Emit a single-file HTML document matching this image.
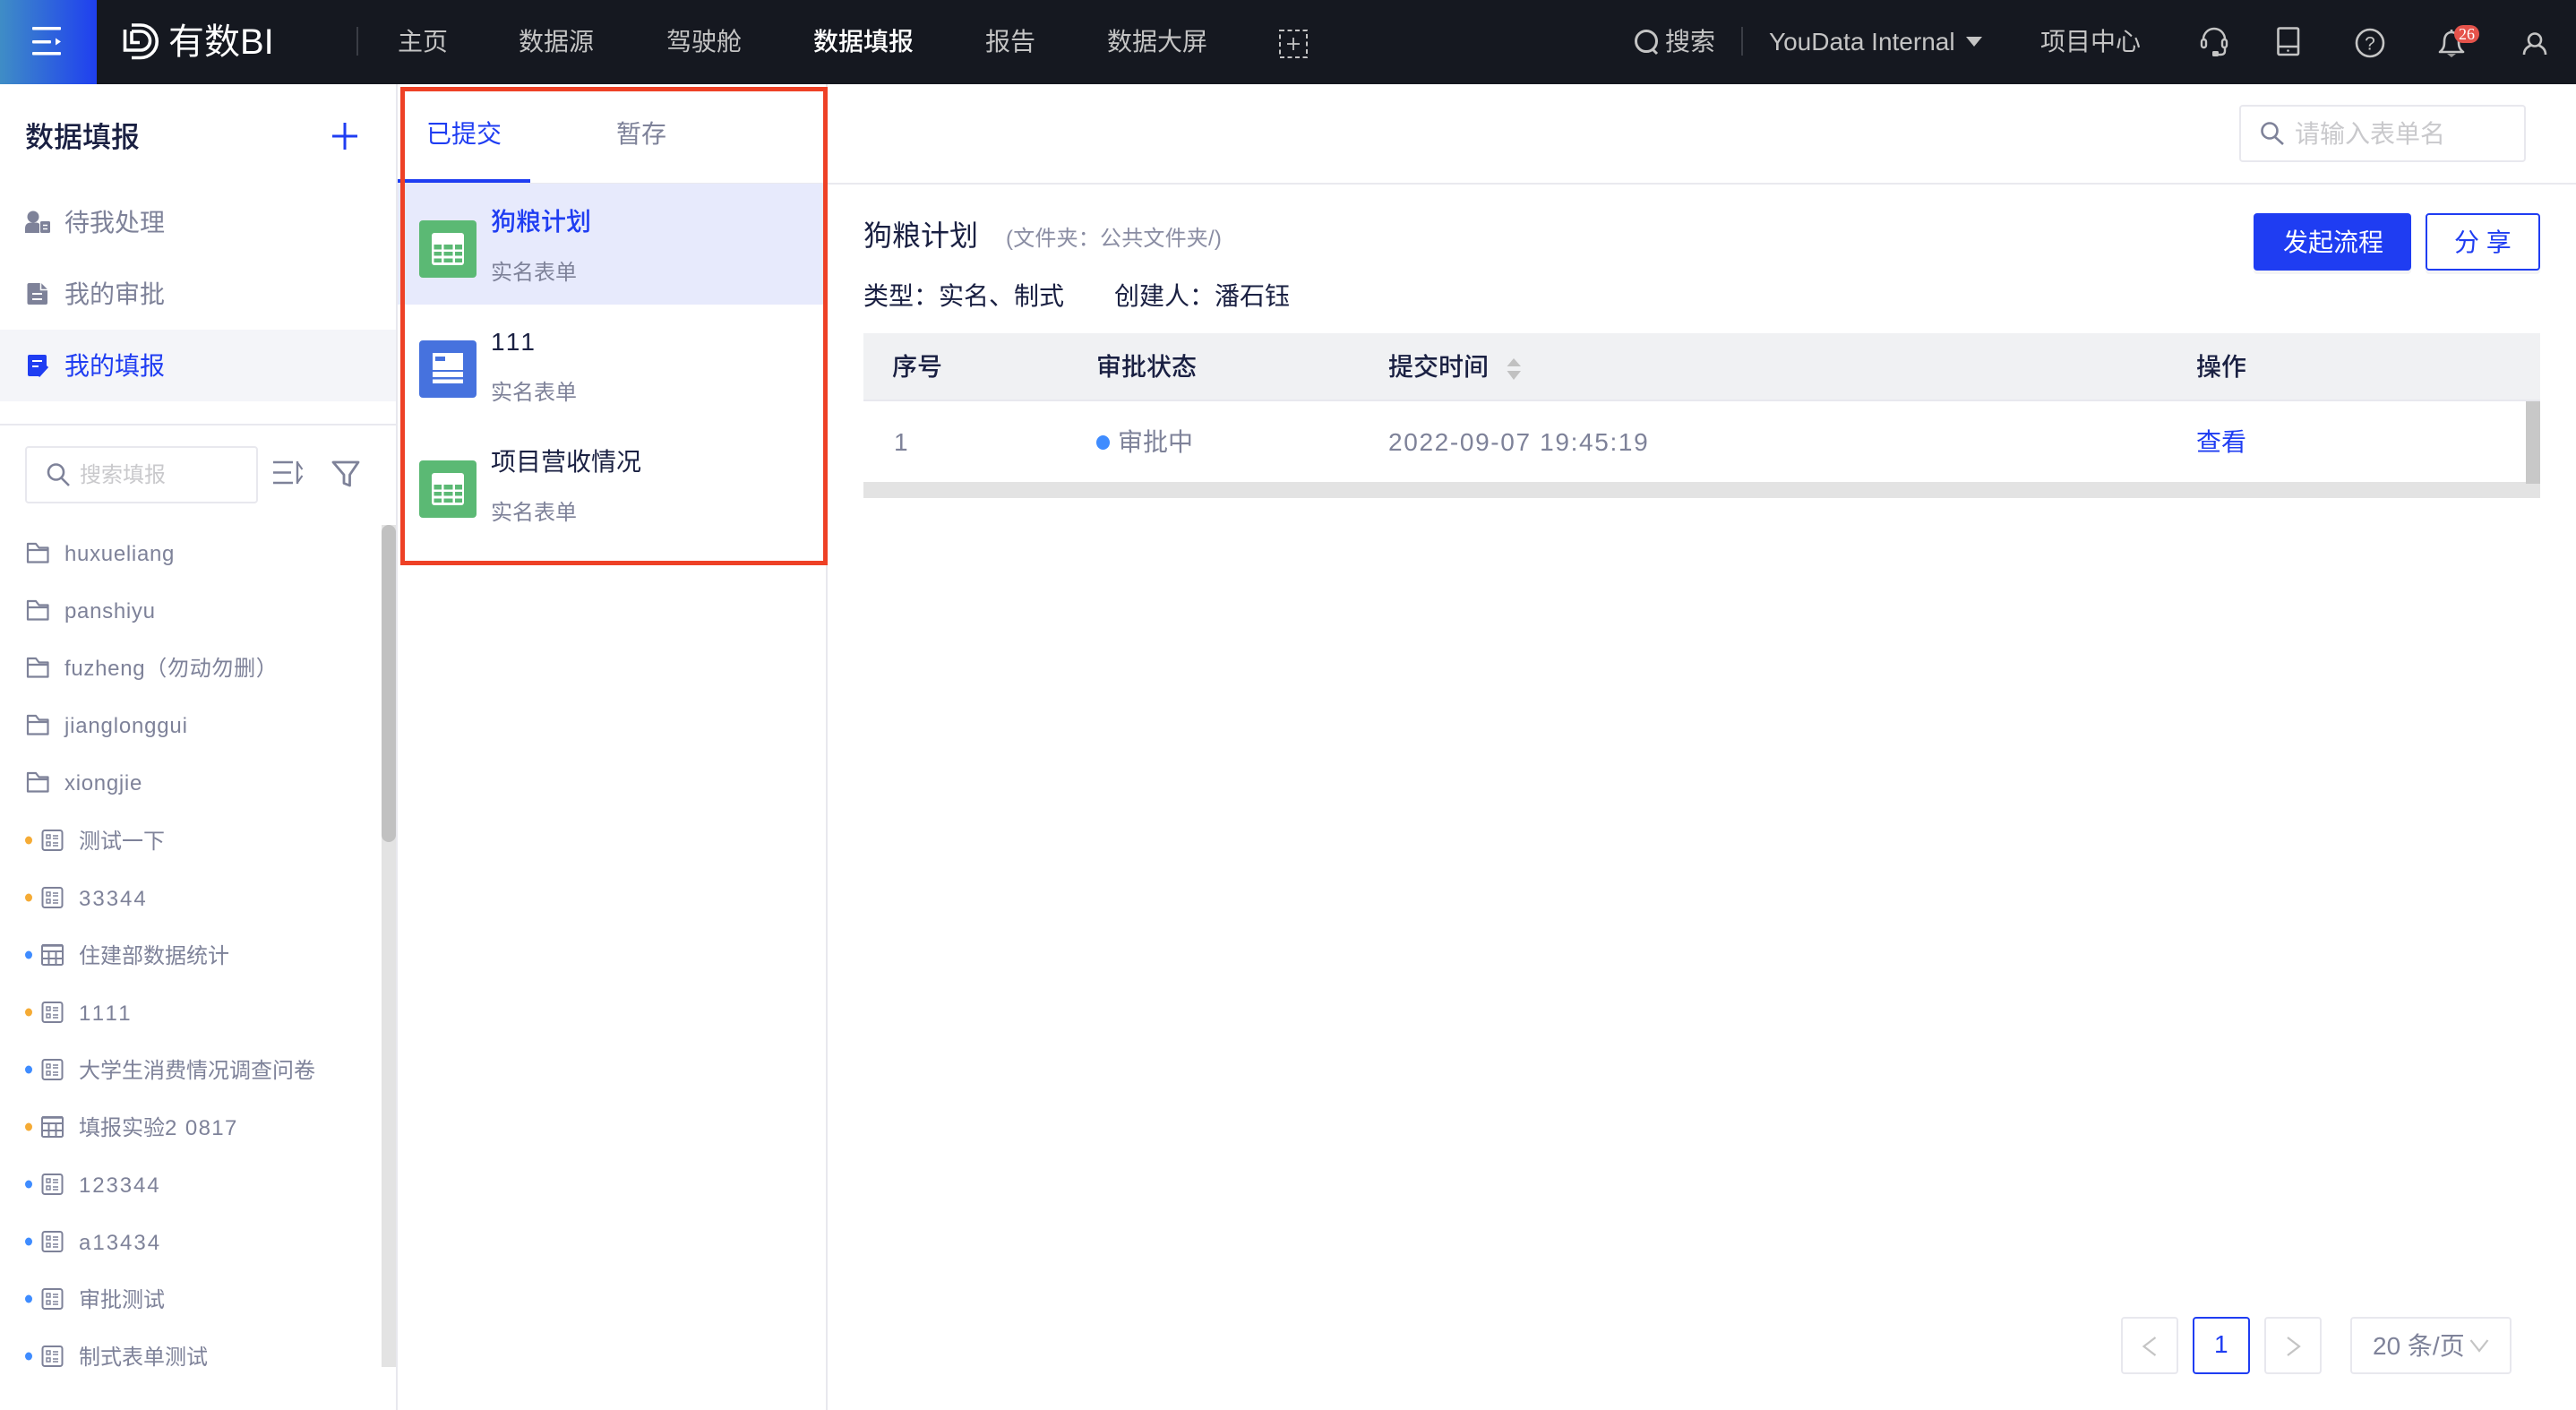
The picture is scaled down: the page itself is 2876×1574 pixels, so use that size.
<!DOCTYPE html>
<html lang="zh-CN">
<head>
<meta charset="utf-8">
<title>有数BI 数据填报</title>
<style>
html,body{margin:0;padding:0;width:2876px;height:1574px;overflow:hidden;background:#fff}
body{position:relative;font-family:"Liberation Sans","Noto Sans CJK SC",sans-serif;color:#1a2042}
.b{position:absolute}
.t{position:absolute;white-space:nowrap;line-height:40px;height:40px;font-size:28px;margin:1px 0 0 -1px}
.g{color:#7e8299}
.n{color:#c4c4c4}
.m{font-weight:500}
.s{font-size:24px}
.l{font-size:24px;color:#7e8299;letter-spacing:.7px}
.ph{color:#c9c9cc}
.bl{color:#1f3df2}
svg.o{position:absolute;left:0;top:0}
</style>
</head>
<body>
<!-- header -->
<div class="b" style="left:0;top:0;width:2876px;height:94px;background:#151820"></div>
<div class="b" style="left:0;top:0;width:108px;height:94px;background:linear-gradient(90deg,#3f8dc6,#1f3ff0)"></div>
<div class="t" style="left:189px;top:26px;font-size:40px;color:#fff">有数BI</div>
<div class="b" style="left:398px;top:30px;width:2px;height:32px;background:#3a3d45"></div>
<div class="t n" style="left:445px;top:26px">主页</div>
<div class="t n" style="left:580px;top:26px">数据源</div>
<div class="t n" style="left:745px;top:26px">驾驶舱</div>
<div class="t m" style="left:909px;top:26px;color:#fff">数据填报</div>
<div class="t n" style="left:1101px;top:26px">报告</div>
<div class="t n" style="left:1237px;top:26px">数据大屏</div>
<div class="t n" style="left:1860px;top:26px">搜索</div>
<div class="b" style="left:1944px;top:30px;width:2px;height:32px;background:#3a3d45"></div>
<div class="t n" style="left:1976px;top:26px">YouData Internal</div>
<div class="t n" style="left:2279px;top:26px">项目中心</div>

<!-- sidebar -->
<div class="b" style="left:442px;top:94px;width:2px;height:1480px;background:#e8e8ee"></div>
<div class="t m" style="left:29px;top:132px;font-size:32px">数据填报</div>
<div class="b" style="left:0;top:368px;width:442px;height:80px;background:#f4f5f9"></div>
<div class="b" style="left:0;top:473px;width:442px;height:2px;background:#e9e9ef"></div>
<div class="t g" style="left:73px;top:228px">待我处理</div>
<div class="t g" style="left:73px;top:308px">我的审批</div>
<div class="t bl" style="left:73px;top:388px">我的填报</div>
<div class="b" style="left:28px;top:498px;width:256px;height:60px;border:2px solid #e8e8ee;border-radius:4px"></div>
<div class="t s ph" style="left:90px;top:510px">搜索填报</div>
<div class="b" style="left:426px;top:586px;width:16px;height:940px;background:#e3e3e3"></div>
<div class="b" style="left:426px;top:586px;width:16px;height:354px;background:#c1c1c1;border-radius:8px"></div>

<div class="t l" style="left:73px;top:598px">huxueliang</div>
<div class="t l" style="left:73px;top:662px">panshiyu</div>
<div class="t l" style="left:73px;top:726px">fuzheng（勿动勿删）</div>
<div class="t l" style="left:73px;top:790px;letter-spacing:.8px">jianglonggui</div>
<div class="t l" style="left:73px;top:854px">xiongjie</div>
<div class="t l" style="left:89px;top:919px;letter-spacing:0">测试一下</div>
<div class="t l" style="left:89px;top:983px;letter-spacing:2px">33344</div>
<div class="t l" style="left:89px;top:1047px;letter-spacing:0">住建部数据统计</div>
<div class="t l" style="left:89px;top:1111px;letter-spacing:3.2px">1111</div>
<div class="t l" style="left:89px;top:1175px;letter-spacing:0">大学生消费情况调查问卷</div>
<div class="t l" style="left:89px;top:1239px;letter-spacing:0">填报实验<span style="letter-spacing:1.400px">2 0817</span></div>
<div class="t l" style="left:89px;top:1303px;letter-spacing:1.900px">123344</div>
<div class="t l" style="left:89px;top:1367px;letter-spacing:2px">a13434</div>
<div class="t l" style="left:89px;top:1431px;letter-spacing:0">审批测试</div>
<div class="t l" style="left:89px;top:1495px;letter-spacing:0">制式表单测试</div>

<!-- middle panel -->
<div class="b" style="left:922px;top:94px;width:2px;height:1480px;background:#e8e8ee"></div>
<div class="b" style="left:444px;top:204px;width:2432px;height:2px;background:#e9e9ef"></div>
<div class="b" style="left:444px;top:200px;width:148px;height:4px;background:#1f3df2"></div>
<div class="t bl" style="left:477px;top:129px">已提交</div>
<div class="t g" style="left:689px;top:129px">暂存</div>
<div class="b" style="left:444px;top:205px;width:477px;height:135px;background:#e7eafc"></div>
<div class="t m bl" style="left:549px;top:227px">狗粮计划</div>
<div class="t s g" style="left:549px;top:284px">实名表单</div>
<div class="t" style="left:549px;top:361px;letter-spacing:3.200px">111</div>
<div class="t s g" style="left:549px;top:418px">实名表单</div>
<div class="t" style="left:549px;top:495px">项目营收情况</div>
<div class="t s g" style="left:549px;top:552px">实名表单</div>
<div class="b" style="left:447px;top:97px;width:467px;height:524px;border:5px solid #ee4126"></div>

<!-- right top -->
<div class="b" style="left:2500px;top:117px;width:316px;height:60px;border:2px solid #e8e8ee;border-radius:4px"></div>
<div class="t ph" style="left:2563px;top:129px">请输入表单名</div>

<!-- content head -->
<div class="t" style="left:965px;top:242px;font-size:32px">狗粮计划</div>
<div class="t s" style="left:1124px;top:246px;color:#8a8da3;letter-spacing:.2px">(文件夹：公共文件夹/)</div>
<div class="t" style="left:965px;top:310px">类型：实名、制式</div>
<div class="t" style="left:1245px;top:310px">创建人：潘石钰</div>
<div class="b" style="left:2516px;top:238px;width:176px;height:64px;background:#1f3df2;border-radius:4px;box-shadow:0 4px 0 #f4f4f6"></div>
<div class="t" style="left:2550px;top:250px;color:#fff">发起流程</div>
<div class="b" style="left:2708px;top:238px;width:124px;height:60px;border:2px solid #1f3df2;border-radius:4px;box-shadow:0 4px 0 #f4f4f6"></div>
<div class="t bl" style="left:2741px;top:250px">分 享</div>

<!-- table -->
<div class="b" style="left:964px;top:372px;width:1872px;height:74px;background:#f0f1f3"></div>
<div class="b" style="left:964px;top:446px;width:1872px;height:2px;background:#e8e8ee"></div>
<div class="t m" style="left:997px;top:389px">序号</div>
<div class="t m" style="left:1225px;top:389px">审批状态</div>
<div class="t m" style="left:1551px;top:389px">提交时间</div>
<div class="t m" style="left:2453px;top:389px">操作</div>
<div class="t g" style="left:999px;top:473px">1</div>
<div class="b" style="left:1224px;top:486px;width:15px;height:16px;border-radius:50%;background:#3f8cff"></div>
<div class="t g" style="left:1249px;top:473px">审批中</div>
<div class="t g" style="left:1551px;top:473px;letter-spacing:1.650px">2022-09-07 19:45:19</div>
<div class="t bl" style="left:2453px;top:473px">查看</div>
<div class="b" style="left:964px;top:538px;width:1872px;height:18px;background:#e3e3e3"></div>
<div class="b" style="left:2820px;top:448px;width:16px;height:92px;background:#c8c8c8"></div>

<!-- pagination -->
<div class="b" style="left:2368px;top:1470px;width:60px;height:60px;border:2px solid #e8e8ee;border-radius:4px"></div>
<div class="b" style="left:2448px;top:1470px;width:60px;height:60px;border:2px solid #1f3df2;border-radius:4px"></div>
<div class="t bl" style="left:2473px;top:1480px">1</div>
<div class="b" style="left:2528px;top:1470px;width:60px;height:60px;border:2px solid #e8e8ee;border-radius:4px"></div>
<div class="b" style="left:2624px;top:1470px;width:176px;height:60px;border:2px solid #e8e8ee;border-radius:4px"></div>
<div class="t g" style="left:2650px;top:1482px">20 条/页</div>

<!-- icons -->
<svg class="o" width="2876" height="1574" viewBox="0 0 2876 1574" fill="none">
<defs>
<g id="folder" stroke="#7e8299" stroke-width="2.200" stroke-linejoin="round"><path d="M31 607h9l3.500 4.500H53.500V627.500H31Z M31 614H53.500"/></g>
<g id="form" stroke="#7e8299"><rect x="47.500" y="-11" width="22" height="22" rx="2.500" stroke-width="2"/><path stroke-width="1.400" d="M52 -6h4v4h-4Z M52 2h4v4h-4Z M59 -5h6 M59 -2h6 M59 3h6 M59 6h6"/></g>
<g id="grid" stroke="#7e8299" stroke-width="2"><rect x="47" y="-11" width="23" height="22" rx="1.500"/><path d="M47 -4H70 M47 4H70 M54.500 -4V11 M62.500 -4V11"/><path d="M47 -10.500H70" stroke-width="2.600"/></g>
<g id="sheet"><rect x="0" y="0" width="64" height="64" rx="4" fill="#5bb974"/><rect x="14" y="14" width="36" height="36" rx="3" fill="#fff"/><path fill="#5bb974" d="M16.500 27h8.500v5.500h-8.500Z M27.500 27h10v5.500h-10Z M40 27h8v5.500h-8Z M16.500 35h8.500v4.500h-8.500Z M27.500 35h10v4.500h-10Z M40 35h8v4.500h-8Z M16.500 42.500h8.500v4.500h-8.500Z M27.500 42.500h10v4.500h-10Z M40 42.500h8v4.500h-8Z"/></g>
</defs>

<!-- hamburger -->
<g fill="#fff"><rect x="36" y="30" width="32" height="3.500" rx="1"/><rect x="36" y="45" width="21" height="3.500" rx="1"/><path d="M62 42.500l6 4-6 4Z"/><rect x="36" y="58" width="32" height="3.500" rx="1"/></g>
<!-- logo -->
<g stroke="#fff" stroke-width="3.600"><path d="M147 28H157A18 18 0 0 1 157 64.500H147"/><path d="M139.500 33V56H157A10.500 10.500 0 0 0 157 35H147"/><path d="M147 35V47.500H156"/></g>
<!-- add dashed -->
<g stroke="#c4c4c4" stroke-width="2"><rect x="1429" y="34" width="30" height="30" stroke-dasharray="5 3.500"/><path d="M1444 42V56M1437 49H1451" stroke-width="1.800"/></g>
<!-- nav search -->
<g stroke="#c4c4c4" stroke-width="3"><circle cx="1838" cy="46" r="11.500"/><path d="M1845 55l5 5"/></g>
<path d="M2195 41H2213L2204 52Z" fill="#c4c4c4"/>
<!-- headset -->
<g stroke="#c4c4c4" stroke-width="2.400" stroke-linecap="round"><path d="M2460 44A12 12 0 0 1 2484 44"/><rect x="2458" y="44" width="5" height="9" rx="2.500"/><rect x="2481" y="44" width="5" height="9" rx="2.500"/><path d="M2484 53V57Q2484 61 2479 61H2474"/></g>
<rect x="2470" y="57" width="7" height="6" rx="1.500" fill="#c4c4c4"/>
<!-- phone -->
<g stroke="#c4c4c4" stroke-width="2.600"><rect x="2543.500" y="31.500" width="22.500" height="29.500" rx="1.500"/><path d="M2543.500 52H2566"/></g>
<circle cx="2554.500" cy="56.500" r="1.300" fill="#c4c4c4"/>
<!-- help -->
<circle cx="2646" cy="48" r="15" stroke="#c4c4c4" stroke-width="2.600"/>
<text x="2646" y="55.500" text-anchor="middle" font-family="Liberation Sans" font-size="21" fill="#c4c4c4">?</text>
<!-- bell -->
<path d="M2724 58C2729 54 2729 50 2729 46C2729 39 2733 36 2737 36C2741 36 2745 39 2745 46C2745 50 2745 54 2750 58Z" stroke="#c4c4c4" stroke-width="2.600" stroke-linejoin="round"/>
<path d="M2737 36V33" stroke="#c4c4c4" stroke-width="2.600"/>
<path d="M2732 60H2742L2737 64Z" fill="#9a9a9a"/>
<rect x="2740" y="28" width="28" height="20" rx="10" fill="#e5534b"/>
<text x="2754" y="44" text-anchor="middle" font-family="Liberation Serif" font-size="18" fill="#fff">26</text>
<!-- user -->
<g stroke="#c4c4c4" stroke-width="2.600"><circle cx="2830" cy="44.500" r="7"/><path d="M2818 61C2818 55 2822 52 2826 50.500M2842 61C2842 55 2838 52 2834 50.500"/></g>

<!-- plus -->
<path d="M385 137V167M371 152H399" stroke="#1f3df2" stroke-width="3"/>
<!-- menu icons -->
<g fill="#7e8299"><circle cx="37" cy="242" r="6.500"/><path d="M28 260V255Q28 248.500 35 248.500H40Q43 248.500 44 250V260Z"/><rect x="45" y="247" width="11" height="13" rx="1.500"/></g>
<path d="M48 251.500h5M48 255.500h5" stroke="#fff" stroke-width="1.600"/>
<path d="M32.500 316H46L53 323V338Q53 340 51 340H32.500Q30.500 340 30.500 338V318Q30.500 316 32.500 316Z" fill="#7e8299"/>
<path d="M45.500 316V323.500H53" stroke="#fff" stroke-width="1.500"/>
<path d="M36 328H47M36 334H47" stroke="#fff" stroke-width="2"/>
<path d="M33 396H50Q52 396 52 398V410L44 420H33Q31 420 31 418V398Q31 396 33 396Z" fill="#1f3df2"/>
<path d="M36 403H47M36 409H43" stroke="#fff" stroke-width="2"/>
<path d="M43 420L53 409" stroke="#1f3df2" stroke-width="3"/>

<!-- side search -->
<g stroke="#7e8299" stroke-width="2.600"><circle cx="62.500" cy="527" r="8.500"/><path d="M69 534l8 8"/></g>
<g stroke="#7e8299" stroke-width="2.400"><path d="M305 516H327M305 527.500H325M305 539H327"/><path d="M332 515V540"/><path d="M332.500 517L337.500 524M332.500 538L337.500 531" stroke-width="2"/></g>
<path d="M372 516H400L390.500 530V542L384 539.500V530Z" stroke="#7e8299" stroke-width="2.800" stroke-linejoin="round"/>

<!-- tree folders -->
<use href="#folder"/>
<use href="#folder" y="64"/>
<use href="#folder" y="128"/>
<use href="#folder" y="192"/>
<use href="#folder" y="256"/>
<!-- tree forms -->
<g fill="#f5ab35"><ellipse cx="32" cy="938" rx="4" ry="4.500"/><ellipse cx="32" cy="1002" rx="4" ry="4.500"/><ellipse cx="32" cy="1130" rx="4" ry="4.500"/><ellipse cx="32" cy="1258" rx="4" ry="4.500"/></g>
<g fill="#3f8cff"><ellipse cx="32" cy="1066" rx="4" ry="4.500"/><ellipse cx="32" cy="1194" rx="4" ry="4.500"/><ellipse cx="32" cy="1322" rx="4" ry="4.500"/><ellipse cx="32" cy="1386" rx="4" ry="4.500"/><ellipse cx="32" cy="1450" rx="4" ry="4.500"/><ellipse cx="32" cy="1514" rx="4" ry="4.500"/></g>
<use href="#form" y="938"/>
<use href="#form" y="1002"/>
<use href="#grid" y="1066"/>
<use href="#form" y="1130"/>
<use href="#form" y="1194"/>
<use href="#grid" y="1258"/>
<use href="#form" y="1322"/>
<use href="#form" y="1386"/>
<use href="#form" y="1450"/>
<use href="#form" y="1514"/>

<!-- panel icons -->
<use href="#sheet" x="468" y="246"/>
<use href="#sheet" x="468" y="514"/>
<rect x="468" y="380" width="64" height="64" rx="4" fill="#4672de"/>
<path d="M483 394H517V413H483Z M483 415H517V421H483Z M483 423.500H517V428H483Z" fill="#fff"/>
<rect x="486" y="398" width="11" height="5" fill="#4672de"/>

<!-- right search -->
<g stroke="#7e8299" stroke-width="2.600"><circle cx="2534" cy="146" r="8.500"/><path d="M2540 153l9 8"/></g>
<!-- sort arrows -->
<path d="M1690 400L1698 409H1682.500Z M1682.500 414H1698L1690 424Z" fill="#c1c1c1"/>
<!-- pagination chevrons -->
<g stroke="#c4c4c4" stroke-width="2.200"><path d="M2406.500 1493L2393.500 1503L2406.500 1513"/><path d="M2554 1493L2567 1503L2554 1513"/><path d="M2758.500 1496L2768 1508L2777.500 1496"/></g>
</svg>
</body>
</html>
